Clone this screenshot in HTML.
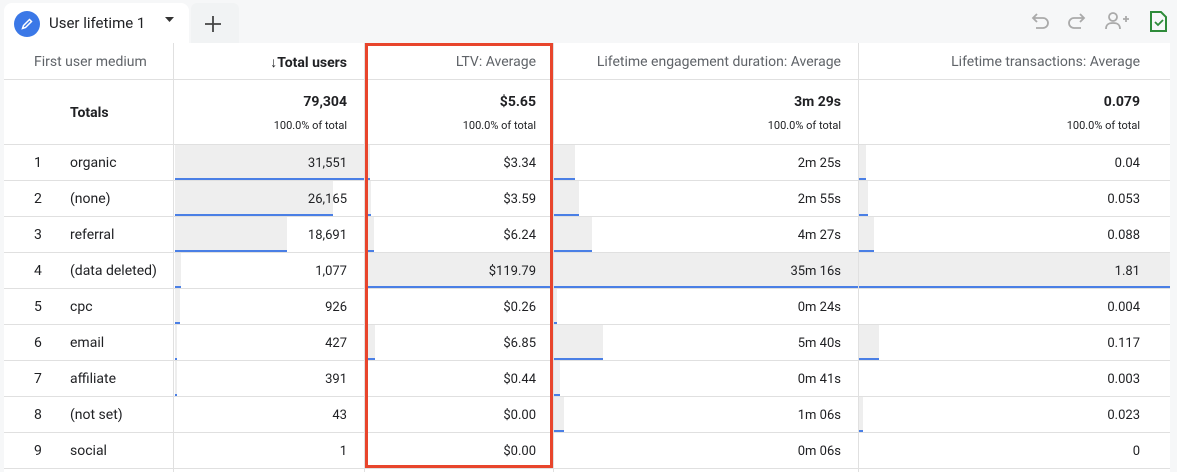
<!DOCTYPE html>
<html><head><style>
*{box-sizing:border-box;margin:0;padding:0}
body{width:1177px;height:472px;background:#f6f7f8;font-family:Roboto,"Liberation Sans",sans-serif;color:#202124;position:relative;overflow:hidden;font-size:13px}
.tab{position:absolute;left:4px;top:3px;width:185px;height:41px;background:#fff;border-radius:8px 8px 0 0}
.plus{position:absolute;left:191px;top:3px;width:48px;height:41px;background:#f1f3f4;border-radius:6px 6px 0 0}
.tbl{position:absolute;left:4px;top:43px;width:1166px;height:429px;background:#fff}
.abs{position:absolute}
.hl{position:absolute;left:4px;width:1166px;height:1px;background:#e0e0e0}
.vl{position:absolute;width:1px;background:#e0e0e0}
.r{position:absolute;text-align:right;white-space:nowrap}
.bar{position:absolute;background:#eeeeee;border-bottom:2px solid #4a7fe5}
</style></head><body>
<div class="tab"></div>
<div class="plus"></div>
<svg class="abs" style="left:14px;top:11px" width="26" height="26"><circle cx="13" cy="13" r="13" fill="#3b78e7"/><path d="M8.5 17.5l1-3 6-6 2 2-6 6z" fill="none" stroke="#fff" stroke-width="1.5"/></svg>
<div class="abs" style="left:49px;top:14px;font-size:15px;color:#202124">User lifetime 1</div>
<svg class="abs" style="left:164px;top:16px" width="12" height="8"><path d="M1 1h9l-4.5 5z" fill="#333"/></svg>
<svg class="abs" style="left:204px;top:15px" width="18" height="18"><path d="M9 1v16M1 9h16" stroke="#444" stroke-width="1.8"/></svg>
<svg class="abs" style="left:1030px;top:10px" width="140" height="22" fill="none" stroke="#aaa" stroke-width="1.8">
<path d="M4 8h9a5 5 0 010 10H6M7 4L3 8l4 4"/>
<path d="M53 8h-9a5 5 0 000 10h7M50 4l4 4-4 4"/>
<circle cx="83" cy="7" r="4"/><path d="M76 19c0-5 3-6 7-6s7 1 7 6M93 9h6M96 6v6"/>
<path d="M121 2h10l5 5v14h-15z" stroke="#2e8b3a" stroke-width="2"/><path d="M125 12l3 3 5-5" stroke="#2e8b3a"/>
</svg>
<div class="tbl"></div>
<div class="bar" style="left:175px;top:145px;width:190px;height:35px"></div>
<div class="bar" style="left:175px;top:181px;width:158px;height:35px"></div>
<div class="bar" style="left:175px;top:217px;width:112px;height:35px"></div>
<div class="bar" style="left:175px;top:253px;width:6px;height:35px"></div>
<div class="bar" style="left:175px;top:289px;width:5px;height:35px"></div>
<div class="bar" style="left:175px;top:325px;width:2px;height:35px"></div>
<div class="bar" style="left:175px;top:361px;width:2px;height:35px"></div>
<div class="bar" style="left:365px;top:145px;width:5px;height:35px"></div>
<div class="bar" style="left:365px;top:181px;width:6px;height:35px"></div>
<div class="bar" style="left:365px;top:217px;width:9px;height:35px"></div>
<div class="bar" style="left:365px;top:253px;width:188px;height:35px"></div>
<div class="bar" style="left:365px;top:325px;width:10px;height:35px"></div>
<div class="bar" style="left:365px;top:361px;width:2px;height:35px"></div>
<div class="bar" style="left:554px;top:145px;width:21px;height:35px"></div>
<div class="bar" style="left:554px;top:181px;width:25px;height:35px"></div>
<div class="bar" style="left:554px;top:217px;width:38px;height:35px"></div>
<div class="bar" style="left:554px;top:253px;width:304px;height:35px"></div>
<div class="bar" style="left:554px;top:289px;width:3px;height:35px"></div>
<div class="bar" style="left:554px;top:325px;width:49px;height:35px"></div>
<div class="bar" style="left:554px;top:361px;width:6px;height:35px"></div>
<div class="bar" style="left:554px;top:397px;width:10px;height:35px"></div>
<div class="bar" style="left:859px;top:145px;width:7px;height:35px"></div>
<div class="bar" style="left:859px;top:181px;width:9px;height:35px"></div>
<div class="bar" style="left:859px;top:217px;width:15px;height:35px"></div>
<div class="bar" style="left:859px;top:253px;width:311px;height:35px"></div>
<div class="bar" style="left:859px;top:325px;width:20px;height:35px"></div>
<div class="bar" style="left:859px;top:397px;width:4px;height:35px"></div>
<div class="hl" style="top:79px"></div><div class="hl" style="top:144px"></div>
<div class="hl" style="top:180px"></div><div class="hl" style="top:216px"></div><div class="hl" style="top:252px"></div>
<div class="hl" style="top:288px"></div><div class="hl" style="top:324px"></div><div class="hl" style="top:360px"></div>
<div class="hl" style="top:396px"></div><div class="hl" style="top:432px"></div><div class="hl" style="top:468px"></div>
<div class="vl" style="left:173px;top:43px;height:429px"></div>
<div class="vl" style="left:364px;top:43px;height:429px"></div>
<div class="vl" style="left:553px;top:43px;height:429px"></div>
<div class="vl" style="left:858px;top:43px;height:429px"></div>
<div class="abs" style="left:34px;top:54px;color:#5f6368;font-size:14px">First user medium</div>
<div class="r" style="right:830px;top:54px;font-size:14px;font-weight:bold">↓Total users</div>
<div class="r" style="right:641px;top:54px;font-size:14px;color:#5f6368">LTV: Average</div>
<div class="r" style="right:336px;top:54px;font-size:14px;color:#5f6368">Lifetime engagement duration: Average</div>
<div class="r" style="right:37px;top:54px;font-size:14px;color:#5f6368">Lifetime transactions: Average</div>
<div class="abs" style="left:70px;top:105px;font-weight:bold;font-size:14px">Totals</div>
<div class="r" style="right:830px;top:94px;font-size:14px;font-weight:bold">79,304</div>
<div class="r" style="right:641px;top:94px;font-size:14px;font-weight:bold">$5.65</div>
<div class="r" style="right:336px;top:94px;font-size:14px;font-weight:bold">3m 29s</div>
<div class="r" style="right:37px;top:94px;font-size:14px;font-weight:bold">0.079</div>
<div class="r" style="right:830px;top:119px;font-size:11px">100.0% of total</div>
<div class="r" style="right:641px;top:119px;font-size:11px">100.0% of total</div>
<div class="r" style="right:336px;top:119px;font-size:11px">100.0% of total</div>
<div class="r" style="right:37px;top:119px;font-size:11px">100.0% of total</div>
<div id="rows"></div>
<script>
var d=[["organic","31,551","$3.34","2m 25s","0.04"],["(none)","26,165","$3.59","2m 55s","0.053"],["referral","18,691","$6.24","4m 27s","0.088"],["(data deleted)","1,077","$119.79","35m 16s","1.81"],["cpc","926","$0.26","0m 24s","0.004"],["email","427","$6.85","5m 40s","0.117"],["affiliate","391","$0.44","0m 41s","0.003"],["(not set)","43","$0.00","1m 06s","0.023"],["social","1","$0.00","0m 06s","0"]];
var h="";d.forEach(function(r,i){var t=155+36*i;
h+='<div class="abs" style="left:34px;top:'+t+'px;font-size:14px">'+(i+1)+'</div><div class="abs" style="left:70px;top:'+t+'px;font-size:14px">'+r[0]+'</div>';
[830,641,336,37].forEach(function(x,j){h+='<div class="r" style="right:'+x+'px;top:'+(t+1)+'px;font-size:13px">'+r[j+1]+'</div>'});});
document.getElementById("rows").innerHTML=h;
</script>
<div class="abs" style="left:365px;top:43px;width:188px;height:425px;border:3px solid #e8452c"></div>
</body></html>
